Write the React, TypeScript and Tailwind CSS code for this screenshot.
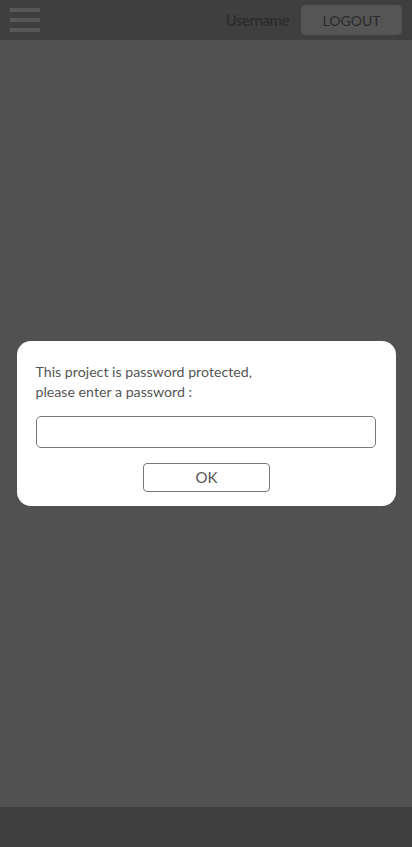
import React, { useState } from 'react';

const font = { fontFamily: 'Lato, "Open Sans", sans-serif' };

export default function App() {
    const [password, setPassword] = useState('');

    return (
        <div className="flex flex-col h-[847px] w-full bg-[#515151]" style={font}>
            <header className="h-10 shrink-0 bg-[#3f3f3f] flex items-center justify-between pl-[10px] pr-[10px]">
                <div className="flex flex-col gap-[6px] w-[30px]">
                    <span className="block h-1 bg-[#575757]"></span>
                    <span className="block h-1 bg-[#575757]"></span>
                    <span className="block h-1 bg-[#575757]"></span>
                </div>
                <div className="flex items-center gap-3">
                    <span className="text-[15px] font-semibold text-[#2b2b2b] tracking-[-0.5px]">Username</span>
                    <button className="w-[101px] h-[30px] rounded-[5px] bg-[#555555] text-[14px] text-[#2b2b2b]">
                        LOGOUT
                    </button>
                </div>
            </header>

            <main className="flex-1 flex items-center justify-center">
                <div className="w-[379px] bg-white rounded-[14px] pt-[21px] pb-[14px] pl-[19px] pr-[20px]">
                    <p className="text-[14.2px] leading-5 text-[#555555]">
                        This project is password protected,<br />
                        please enter a password :
                    </p>
                    <input
                        type="password"
                        value={password}
                        onChange={(e) => setPassword(e.target.value)}
                        className="mt-[14px] block w-full h-[32px] border border-[#777777] rounded-[5px] outline-none px-2"
                    />
                    <div className="flex justify-center mt-[15px] pl-[2px]">
                        <button className="w-[127px] h-[29px] border border-[#777777] rounded-[4px] text-[15px] text-[#555555]">
                            OK
                        </button>
                    </div>
                </div>
            </main>

            <footer className="h-10 shrink-0 bg-[#3f3f3f]"></footer>
        </div>
    );
}
